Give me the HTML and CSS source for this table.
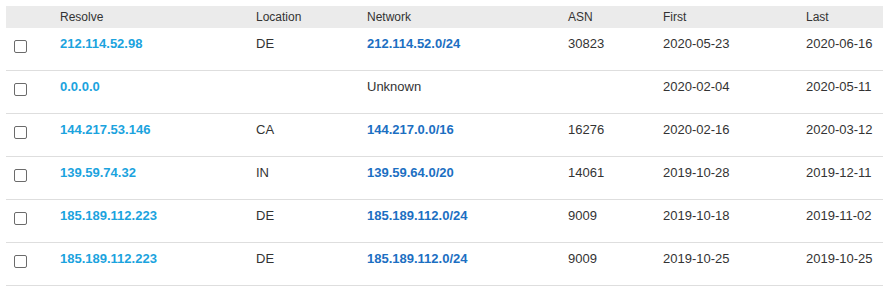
FILE: index.html
```html
<!DOCTYPE html>
<html>
<head>
<meta charset="utf-8">
<link rel="stylesheet" href="styles.css">
</head>
<body>
<div class="wrap">
<table class="grid">
  <colgroup>
    <col class="c0"><col class="c1"><col class="c2"><col class="c3"><col class="c4"><col class="c5"><col class="c6">
  </colgroup>
  <thead>
    <tr><th></th><th>Resolve</th><th>Location</th><th>Network</th><th>ASN</th><th>First</th><th>Last</th></tr>
  </thead>
  <tbody>
    <tr><td class="cb"><span class="box"></span></td><td><a class="ip">212.114.52.98</a></td><td>DE</td><td><a class="net">212.114.52.0/24</a></td><td>30823</td><td>2020-05-23</td><td>2020-06-16</td></tr>
    <tr><td class="cb"><span class="box"></span></td><td><a class="ip">0.0.0.0</a></td><td></td><td>Unknown</td><td></td><td>2020-02-04</td><td>2020-05-11</td></tr>
    <tr><td class="cb"><span class="box"></span></td><td><a class="ip">144.217.53.146</a></td><td>CA</td><td><a class="net">144.217.0.0/16</a></td><td>16276</td><td>2020-02-16</td><td>2020-03-12</td></tr>
    <tr><td class="cb"><span class="box"></span></td><td><a class="ip">139.59.74.32</a></td><td>IN</td><td><a class="net">139.59.64.0/20</a></td><td>14061</td><td>2019-10-28</td><td>2019-12-11</td></tr>
    <tr><td class="cb"><span class="box"></span></td><td><a class="ip">185.189.112.223</a></td><td>DE</td><td><a class="net">185.189.112.0/24</a></td><td>9009</td><td>2019-10-18</td><td>2019-11-02</td></tr>
    <tr><td class="cb"><span class="box"></span></td><td><a class="ip">185.189.112.223</a></td><td>DE</td><td><a class="net">185.189.112.0/24</a></td><td>9009</td><td>2019-10-25</td><td>2019-10-25</td></tr>
  </tbody>
</table>
</div>
</body>
</html>
```
FILE: styles.css
```css
html, body {
  margin: 0;
  padding: 0;
  background: #fff;
}
.wrap {
  padding: 6px 0 0 6px;
  overflow: hidden;
}
.grid {
  border-collapse: collapse;
  table-layout: fixed;
  width: 877px;
  font-family: "Liberation Sans", Arial, sans-serif;
  color: #333;
}
.c0 { width: 46px; }
.c1 { width: 196px; }
.c2 { width: 111px; }
.c3 { width: 201px; }
.c4 { width: 95px; }
.c5 { width: 143px; }
.c6 { width: 85px; }
.grid th {
  background: #ebebeb;
  font-weight: normal;
  font-size: 12px;
  line-height: 14px;
  height: 22px;
  box-sizing: border-box;
  padding: 4px 8px;
  text-align: left;
  color: #333;
}
.grid td {
  font-size: 13px;
  line-height: 16px;
  padding: 8px 8px 18px;
  vertical-align: top;
  border-bottom: 1px solid #dedede;
  white-space: nowrap;
}
.grid td.cb {
  padding: 12px 8px 0;
}
.box {
  display: block;
  width: 13px;
  height: 13px;
  box-sizing: border-box;
  border: 1px solid #6b6b6b;
  border-radius: 2px;
  background: #fff;
}
.ip {
  color: #1ba3de;
  font-weight: bold;
}
.net {
  color: #1c6fc2;
  font-weight: bold;
}
```
